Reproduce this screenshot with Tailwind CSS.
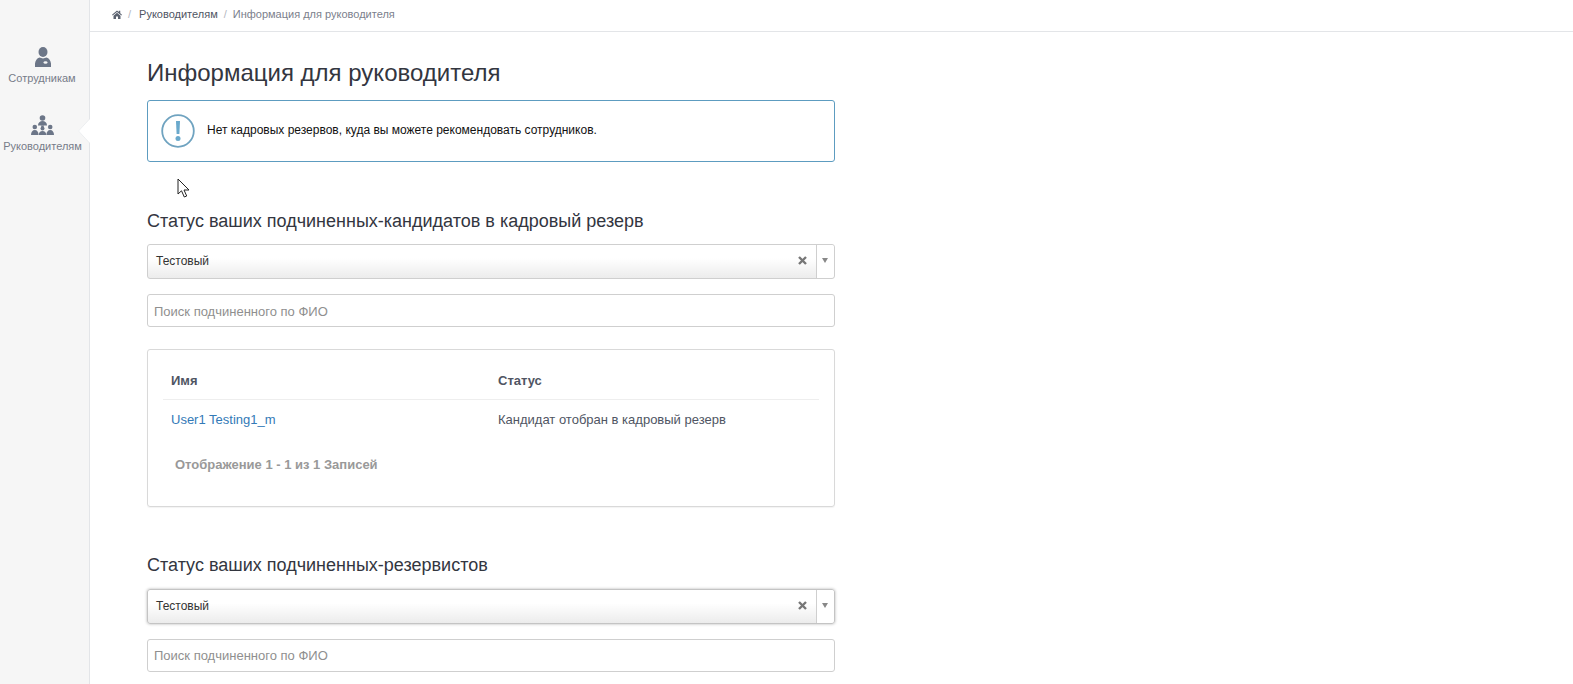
<!DOCTYPE html>
<html lang="ru">
<head>
    <meta charset="UTF-8">
    <title>Информация для руководителя</title>
    <script src="https://cdn.jsdelivr.net/npm/@tailwindcss/browser@4"></script>
</head>
<body class="relative h-screen overflow-hidden bg-white font-['Liberation_Sans',Arial,sans-serif] text-[#333]">
<div class="flex h-[684px]">

    <!-- Sidebar -->
    <aside class="w-[90px] shrink-0 bg-[#f6f6f6] border-r border-[#e3e5e8] pt-[47px] text-[#777c89] text-[11px] leading-[14px]">
        <a class="flex flex-col items-center h-[68px]">
            <svg class="w-[16px] h-[20px] ml-[-4px]" viewBox="0 0 16 20" fill="#6c7688">
                <ellipse cx="8" cy="5" rx="4.500" ry="5"/>
                <path d="M0 20c-.5-5 1-8.500 4.500-9.500L8 11.500l3.500-1c3.500 1 5 4.500 4.500 9.500z"/>
                <ellipse cx="10.500" cy="15.500" rx="2" ry="1.200" fill="#f6f6f6"/>
            </svg>
            <span class="mt-[4px] ml-[-5px]">Сотрудникам</span>
        </a>
        <a class="relative flex flex-col items-center">
            <svg class="w-[23px] h-[20px] ml-[-5px]" viewBox="0 0 23 20" fill="#6c7688">
                <circle cx="11.500" cy="3" r="2.800"/>
                <path d="M7 10.500c0-3 2-4.500 4.500-4.500s4.500 1.500 4.500 4.500z"/>
                <path d="M10 10.500h3l-.8 3h-1.400z"/>
                <circle cx="3.800" cy="12" r="2.300"/>
                <circle cx="11.500" cy="13.500" r="2"/>
                <circle cx="19.200" cy="12" r="2.300"/>
                <path d="M0 20c0-3 1.500-5 3.800-5s3.800 2 3.800 5z"/>
                <path d="M7.800 20c0-2.500 1.500-4 3.700-4s3.700 1.500 3.700 4z"/>
                <path d="M15.400 20c0-3 1.500-5 3.800-5s3.800 2 3.800 5z"/>
            </svg>
            <span class="mt-[4px] ml-[-4px]">Руководителям</span>
        </a>
    </aside>

    <div class="flex-1 min-w-0">
        <!-- Breadcrumb -->
        <nav class="h-[32px] border-b border-[#e3e5e8] pl-[22px] flex items-center text-[11px] pb-[3px]">
            <svg class="w-[10px] h-[9px]" viewBox="0 0 20 18" fill="#5b6270">
                <path d="M10 1 0 9.500l1.300 1.500L10 3.800 18.700 11 20 9.500l-3.500-3V1.500h-3v2.500z"/>
                <path d="M10 5.500 3 11.300V18h5v-5h4v5h5v-6.700z"/>
            </svg>
            <span class="ml-[6px] mr-[8px] text-[#b4b8bf]">/</span>
            <a class="text-[#4f5563]">Руководителям</a>
            <span class="mx-[6px] text-[#b4b8bf]">/</span>
            <span class="text-[#7b808c]">Информация для руководителя</span>
        </nav>

        <!-- Content -->
        <main class="w-[688px] ml-[57px]">
            <h1 class="text-[24px] leading-[26px] mt-[28px] text-[#33363f]">Информация для руководителя</h1>

            <div class="mt-[14px] h-[62px] border border-[#5d9cc0] rounded-[3px] flex items-center pl-[13px]">
                <svg class="w-[34px] h-[34px] shrink-0" viewBox="0 0 34 34">
                    <circle cx="17" cy="17" r="15.800" fill="none" stroke="#6fa3c0" stroke-width="1.800"/>
                    <path d="M15 7h4l-.6 13h-2.800z" fill="#6aa9cc"/>
                    <circle cx="17" cy="24.500" r="2.500" fill="#6aa9cc"/>
                </svg>
                <p class="ml-[12px] pb-[2px] text-[12px] text-[#111]">Нет кадровых резервов, куда вы можете рекомендовать сотрудников.</p>
            </div>

            <h2 class="mt-[49px] text-[18px] leading-[20px] text-[#33363f]">Статус ваших подчиненных-кандидатов в кадровый резерв</h2>

            <div class="mt-[13px] h-[35px] border border-[#cfcfcf] rounded-[3px] flex items-center bg-linear-to-b from-white from-40% to-[#ececec]">
                <span class="flex-1 pl-[8px] pb-[1px] text-[12px] text-[#333]">Тестовый</span>
                <svg class="w-[9px] h-[9px] mr-[9px] mb-[3px]" viewBox="0 0 9 9"><path d="M1 1l7 7M8 1 1 8" stroke="#777" stroke-width="2.400"/></svg>
                <span class="w-[18px] h-full border-l border-[#cfcfcf] bg-white rounded-r-[3px] flex items-center justify-center">
                    <span class="w-0 h-0 mb-[3px] mr-[1px] border-x-[3.500px] border-x-transparent border-t-[5px] border-t-[#888]"></span>
                </span>
            </div>

            <div class="mt-[15px] h-[33px] border border-[#cfcfcf] rounded-[3px] flex items-center pl-[6px] pt-[2px] text-[13px] text-[#8f8f8f]">Поиск подчиненного по ФИО</div>

            <!-- Table card -->
            <div class="mt-[22px] h-[158px] border border-[#d9d9d9] rounded-[3px] shadow-[0_1px_1px_rgba(0,0,0,0.05)] px-[15px] text-[13px] text-[#4f5563]">
                <div class="flex h-[35px] mt-[15px] border-b border-[#eeeeee] pl-[8px] items-center pb-[3px] font-bold">
                    <span class="w-[327px]">Имя</span>
                    <span>Статус</span>
                </div>
                <div class="flex pl-[8px] h-[40px] items-center">
                    <a class="w-[327px] text-[#337ab7]">User1 Testing1_m</a>
                    <span>Кандидат отобран в кадровый резерв</span>
                </div>
                <p class="mt-[15px] pl-[12px] font-bold text-[#999]">Отображение 1 - 1 из 1 Записей</p>
            </div>

            <h2 class="mt-[48px] text-[18px] leading-[20px] text-[#33363f]">Статус ваших подчиненных-резервистов</h2>

            <div class="mt-[14px] h-[35px] border border-[#c4c4c4] rounded-[3px] shadow-[0_0_3px_rgba(0,0,0,0.3)] flex items-center bg-linear-to-b from-white from-40% to-[#ececec]">
                <span class="flex-1 pl-[8px] pb-[1px] text-[12px] text-[#333]">Тестовый</span>
                <svg class="w-[9px] h-[9px] mr-[9px] mb-[3px]" viewBox="0 0 9 9"><path d="M1 1l7 7M8 1 1 8" stroke="#777" stroke-width="2.400"/></svg>
                <span class="w-[18px] h-full border-l border-[#cfcfcf] bg-white rounded-r-[3px] flex items-center justify-center">
                    <span class="w-0 h-0 mb-[3px] mr-[1px] border-x-[3.500px] border-x-transparent border-t-[5px] border-t-[#888]"></span>
                </span>
            </div>

            <div class="mt-[15px] h-[33px] border border-[#cfcfcf] rounded-[3px] flex items-center pl-[6px] text-[13px] text-[#8f8f8f]">Поиск подчиненного по ФИО</div>
        </main>
    </div>
</div>

<!-- Active notch in sidebar -->
<svg class="absolute left-[78px] top-[119px] w-[12px] h-[24px]" viewBox="0 0 12 24">
    <path d="M12 0 0 12l12 12z" fill="#fff"/>
    <path d="M11.500 0 0.500 12l11 12" fill="none" stroke="#eceef0"/>
</svg>

<!-- Mouse cursor -->
<svg class="absolute left-[177px] top-[178px] w-[14px] h-[21px]" viewBox="0 0 14 21">
    <path d="M1 1v15l3.500-3.200 2.800 6.200 2.400-1-2.700-6h5z" fill="#fff" stroke="#222" stroke-width="1"/>
</svg>
</body>
</html>
